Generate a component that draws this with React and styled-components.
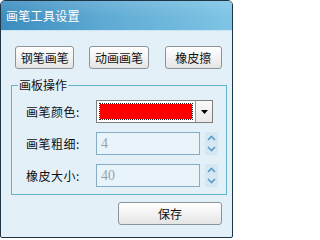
import styled, { createGlobalStyle } from "styled-components";

const GlobalStyle = createGlobalStyle`
    body {
        margin: 0;
        background: #ffffff;
        font-family: "Noto Sans CJK SC", "DejaVu Sans", sans-serif;
        font-size: 12px;
    }
`;

const Window = styled.div`
    width: 231px;
    height: 236px;
    border: 1px solid #1f3546;
    border-radius: 5px 5px 2px 2px;
    background: #e3f0f8;
    overflow: hidden;
    display: flex;
    flex-direction: column;
`;

const TitleBar = styled.div`
    height: 29px;
    display: flex;
    align-items: center;
    padding-left: 5px;
    color: #ffffff;
    font-size: 12px;
    background: linear-gradient(180deg, rgba(255, 255, 255, 0.12), rgba(255, 255, 255, 0) 60%),
        linear-gradient(90deg, #3b8cbf 0%, #5eaad4 45%, #7ec5e5 100%);
    border-bottom: 1px solid #c9e4f2;
    letter-spacing: 0.3px;
`;

const Body = styled.div`
    padding: 15px 10px 0 10px;
    display: flex;
    flex-direction: column;
`;

const ButtonRow = styled.div`
    display: flex;
    padding-left: 4px;
`;

const Button = styled.button`
    width: ${(props) => props.w}px;
    height: 23px;
    margin-left: ${(props) => props.ml || 0}px;
    padding: 0;
    border: 1px solid #8d9499;
    border-radius: 3px;
    background: linear-gradient(180deg, #ffffff 0%, #f4f4f4 45%, #e4e4e4 100%);
    font-family: "Noto Sans CJK SC", sans-serif;
    font-size: 12px;
    color: #111;
`;

const Group = styled.fieldset`
    width: 214px;
    margin: 9px 0 0 0;
    padding: 0;
    border: 1px solid #62b5cb;
`;

const Legend = styled.legend`
    margin-left: 6px;
    padding: 0 1px;
    font-size: 12px;
    line-height: 14px;
    color: #111;
`;

const Rows = styled.div`
    padding: 8px 0 7px 14px;
    display: flex;
    flex-direction: column;
    gap: 9px;
`;

const Row = styled.div`
    display: flex;
    align-items: center;
    height: 23px;
`;

const Label = styled.span`
    width: 70px;
    font-size: 12px;
    color: #111;
    letter-spacing: 0.5px;
`;

const Combo = styled.div`
    width: 115px;
    height: 21px;
    border: 1px solid #7d7d7d;
    display: flex;
    background: #ffffff;
`;

const Swatch = styled.div`
    flex: 1;
    margin: 2px;
    background: #ff0000;
    outline: 1px dotted #222;
    outline-offset: -1px;
    border: 1px solid #fff;
`;

const DropBtn = styled.div`
    width: 16px;
    border-left: 1px solid #9a9a9a;
    background: linear-gradient(180deg, #fafafa, #e8e8e8);
    display: flex;
    align-items: center;
    justify-content: center;
`;

const Field = styled.div`
    width: 98px;
    height: 21px;
    border: 1px solid #86aec4;
    background: #e8f3fa;
    color: #9aa3a8;
    font-family: "Liberation Serif", serif;
    font-size: 14px;
    display: flex;
    align-items: center;
    padding-left: 4px;
    box-sizing: content-box;
`;

const Spin = styled.div`
    width: 13px;
    height: 23px;
    margin-left: 5px;
    display: flex;
    flex-direction: column;
    background: #d5e7f2;
`;

const SpinHalf = styled.div`
    flex: 1;
    display: flex;
    align-items: center;
    justify-content: center;
`;

const Footer = styled.div`
    display: flex;
    justify-content: flex-end;
    padding-right: 0;
    margin-top: 7px;
`;

const Chevron = ({ up }) => (
    <svg width="9" height="6" viewBox="0 0 9 6">
        <path
            d={up ? "M1 5 L4.5 1.5 L8 5" : "M1 1 L4.5 4.5 L8 1"}
            fill="none"
            stroke="#5a9ccc"
            strokeWidth="1.6"
        />
    </svg>
);

const Spinner = () => (
    <Spin>
        <SpinHalf>
            <Chevron up />
        </SpinHalf>
        <SpinHalf>
            <Chevron />
        </SpinHalf>
    </Spin>
);

const App = () => {
    return (
        <Window>
            <GlobalStyle />
            <TitleBar>画笔工具设置</TitleBar>
            <Body>
                <ButtonRow>
                    <Button w={62}>钢笔画笔</Button>
                    <Button w={62} ml={15}>动画画笔</Button>
                    <Button w={60} ml={16}>橡皮擦</Button>
                </ButtonRow>
                <Group>
                    <Legend>画板操作</Legend>
                    <Rows>
                        <Row>
                            <Label>画笔颜色:</Label>
                            <Combo>
                                <Swatch />
                                <DropBtn>
                                    <svg width="7" height="4" viewBox="0 0 7 4">
                                        <path d="M0 0 H7 L3.5 4 Z" fill="#000" />
                                    </svg>
                                </DropBtn>
                            </Combo>
                        </Row>
                        <Row>
                            <Label>画笔粗细:</Label>
                            <Field>4</Field>
                            <Spinner />
                        </Row>
                        <Row>
                            <Label>橡皮大小:</Label>
                            <Field>40</Field>
                            <Spinner />
                        </Row>
                    </Rows>
                </Group>
                <Footer>
                    <Button w={104}>保存</Button>
                </Footer>
            </Body>
        </Window>
    );
};

export default App;
